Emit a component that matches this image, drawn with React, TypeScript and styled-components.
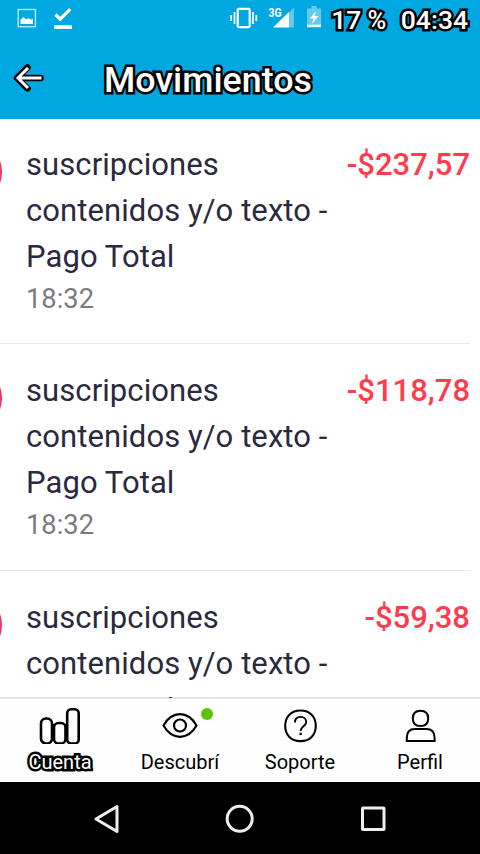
import React from "react";
import styled, { createGlobalStyle, css } from "styled-components";

const GlobalStyle = createGlobalStyle`
  * { box-sizing: border-box; }
  body { margin: 0; background: #fff; font-family: Roboto, sans-serif; overflow: hidden; }
  svg { display: block; flex: none; }
`;

const outlined = css`
  color: #fff;
  -webkit-text-stroke: 5px #000;
  paint-order: stroke fill;
  stroke-linejoin: round;
`;

const Screen = styled.div`
  width: 480px;
  height: 854px;
  display: flex;
  flex-direction: column;
  overflow: hidden;
  background: #fff;
`;

const StatusBar = styled.div`
  height: 38px;
  flex: none;
  display: flex;
  align-items: flex-start;
  justify-content: space-between;
  padding: 0 12px 0 17px;
  background: #00a8e1;
`;

const StatusGroup = styled.div`
  display: flex;
  align-items: center;
  height: 36px;
`;

const IconGap = styled.span<{ $size: number }>`
  width: ${(p) => p.$size}px;
`;

const StatusText = styled.span<{ $gap: number }>`
  ${outlined}
  margin-left: ${(p) => p.$gap}px;
  padding-top: 3px;
  font-size: 26.5px;
  font-weight: 500;
  line-height: 36px;
  white-space: pre;
`;

const Percent = styled.span`
  font-size: 25.5px;
  letter-spacing: -0.4px;
`;

const Header = styled.header`
  height: 81px;
  flex: none;
  display: flex;
  align-items: center;
  padding: 0 0 2px 12px;
  background: #00a8e1;
`;

const Title = styled.h1`
  ${outlined}
  margin: 0 0 0 60px;
  padding-top: 4px;
  font-size: 35.8px;
  line-height: 44px;
  font-weight: 500;
`;

const List = styled.main`
  height: 579px;
  flex: none;
  overflow: hidden;
`;

const Row = styled.section<{ $height: number; $top: number }>`
  height: ${(p) => p.$height}px;
  margin-right: 10px;
  padding-top: ${(p) => p.$top}px;
  display: flex;
  align-items: flex-start;
  border-bottom: 1px solid #e8e8e8;
`;

const Avatar = styled.div`
  width: 68px;
  height: 68px;
  flex: none;
  margin: -4px 24px 0 -66px;
  border-radius: 50%;
  background: #f5365c;
`;

const Details = styled.div`
  flex: 1;
`;

const Description = styled.p`
  margin: 0;
  width: 310px;
  font-size: 31px;
  line-height: 46px;
  letter-spacing: 0.08px;
  color: #2b293d;
`;

const Time = styled.time`
  display: block;
  font-size: 27.3px;
  line-height: 38px;
  color: #7b7b7b;
`;

const Amount = styled.strong`
  flex: none;
  width: 134px;
  text-align: right;
  margin-left: -10px;
  font-size: 31px;
  line-height: 46px;
  font-weight: 500;
  color: #ff3b4e;
  white-space: nowrap;
`;

const TabBar = styled.nav`
  position: relative;
  height: 84px;
  flex: none;
  display: grid;
  grid-template-columns: repeat(4, 1fr);
  border-top: 1px solid #e8e8e8;
  box-shadow: 0 -1px 0 rgba(0, 0, 0, 0.12);
  background: #fefefe;
`;

const Tab = styled.div`
  position: relative;
  display: flex;
  flex-direction: column;
  align-items: center;
  padding-top: 9px;
  font-size: 20px;
  line-height: 28px;
  color: #000;
`;

const TabLabel = styled.span<{ $active?: boolean }>`
  margin-top: 4px;
  ${(p) => p.$active && outlined}
`;

const Badge = styled.i`
  position: absolute;
  left: 81px;
  top: 9px;
  width: 12px;
  height: 12px;
  border-radius: 50%;
  background: #5ac400;
`;

const SystemNav = styled.footer`
  height: 72px;
  flex: none;
  display: flex;
  justify-content: space-between;
  align-items: center;
  padding: 1px 93px 0 92px;
  background: #000;
`;

const PictureIcon = () => (
  <svg width="20" height="20" viewBox="0 0 20 20">
    <rect x="1.200" y="1.500" width="17.200" height="17.200" fill="none" stroke="#b9e6f7" strokeWidth="1.400" />
    <path d="M3.500 16v-4.500l3-2.500 3 2.500 2-1.500 2 1.500 2.500-.5V16z" fill="#fff" />
  </svg>
);

const DoneIcon = () => (
  <svg width="20" height="24" viewBox="0 0 20 24">
    <path d="M2.500 8.500l4.700 4.700L17.200 3.200" fill="none" stroke="#fff" strokeWidth="3.200" />
    <path d="M1 19.200h18v3.700H1z" fill="#fff" />
  </svg>
);

const VibrateIcon = () => (
  <svg width="28" height="22" viewBox="0 0 28 22">
    <rect x="7.700" y="1.900" width="12" height="18.200" rx="1" fill="none" stroke="#fff" strokeWidth="2.200" />
    <path d="M4.500 5v12M1.200 8v6M23 5v12M26.300 8v6" stroke="#fff" strokeWidth="1.700" />
  </svg>
);

const SignalIcon = () => (
  <svg width="28" height="24" viewBox="0 0 28 24">
    <text x="0.500" y="10.500" fontFamily="Roboto, sans-serif" fontSize="12" fontWeight="700" textLength="13" lengthAdjust="spacingAndGlyphs" fill="#fff">3G</text>
    <path d="M26 1.500v20h-5V6.500z" fill="#66caed" />
    <path d="M5 21.500L21 6V21.500z" fill="#fff" />
  </svg>
);

const BatteryIcon = () => (
  <svg width="14" height="24" viewBox="0 0 14 24">
    <path d="M0 2.500h4.500V0h5v2.500H14V20H0z" fill="#66caed" />
    <path d="M9 5L3 12.500h3.500L5 18l6.500-8H7.500z" fill="#fff" />
    <path d="M0 18.700h14v2.500H0z" fill="#fff" />
  </svg>
);

const BackIcon = () => (
  <svg width="32" height="30" viewBox="0 0 32 30">
    <g fill="none">
      <path d="M15.500 4.500L5 15l10.500 10.500M6 15h22.500" stroke="#000" strokeWidth="6.500" strokeLinecap="round" strokeLinejoin="round" />
      <path d="M16 5L6 15l10 10M6.500 15h23" stroke="#fff" strokeWidth="3" />
    </g>
  </svg>
);

const BarsIcon = () => (
  <svg width="42" height="36" viewBox="0 0 42 36">
    <g fill="#fff" stroke="#000" strokeWidth="2.600">
      <rect x="2" y="10.500" width="11" height="25" rx="5" />
      <rect x="15" y="15" width="11.500" height="20.500" rx="4.500" />
      <rect x="28.200" y="1.300" width="11.500" height="34.200" rx="4" />
    </g>
    <path d="M14 16v17M27.400 16v17" stroke="#000" strokeWidth="2" />
  </svg>
);

const EyeIcon = () => (
  <svg width="36" height="36" viewBox="0 0 36 36">
    <g fill="none" stroke="#000" strokeWidth="2.200">
      <path d="M1.500 17.500C5.500 10.500 11 6.200 18 6.200s12.500 4.300 16.500 11.300C30.500 24.500 25 28.800 18 28.800S5.500 24.500 1.500 17.500z" strokeLinejoin="round" />
      <circle cx="18" cy="17.500" r="6" />
    </g>
  </svg>
);

const HelpIcon = () => (
  <svg width="36" height="36" viewBox="0 0 36 36">
    <path d="M18.500 2.500c9.300 0 15.300 6 15.300 15.300S27.800 33.100 18.500 33.100 3.200 27.100 3.200 17.800 9.200 2.500 18.500 2.500z" fill="none" stroke="#000" strokeWidth="2.100" />
    <path d="M13 14.500c0-4 2.500-5.600 5.600-5.600s5.600 1.800 5.600 5c0 4.500-5.600 4.300-5.600 9.100" fill="none" stroke="#000" strokeWidth="1.900" />
    <path d="M17.500 24.700h2.300V27h-2.300z" />
  </svg>
);

const PersonIcon = () => (
  <svg width="36" height="36" viewBox="0 0 36 36">
    <g fill="none" stroke="#000" strokeWidth="2">
      <path d="M18.500 2.800c5.200 0 7.700 2.400 7.700 7.600s-2.500 7.600-7.700 7.600-7.700-2.400-7.700-7.600 2.500-7.600 7.700-7.600z" />
      <path d="M4.800 33.100v-3.600c0-6 2.700-8.600 8.200-8.600h11.400c5.500 0 8.200 2.600 8.200 8.600v3.600z" />
    </g>
  </svg>
);

const NavBackIcon = () => (
  <svg width="28" height="30" viewBox="0 0 28 30">
    <path d="M25 2.500v25L4 15z" fill="none" stroke="#eee" strokeWidth="3" strokeLinejoin="round" />
  </svg>
);

const NavHomeIcon = () => (
  <svg width="30" height="30" viewBox="0 0 30 30">
    <circle cx="14.700" cy="14.800" r="12.500" fill="none" stroke="#eee" strokeWidth="3" />
  </svg>
);

const NavRecentIcon = () => (
  <svg width="28" height="28" viewBox="0 0 28 28">
    <rect x="3.500" y="3" width="21.500" height="21.500" rx=".5" fill="none" stroke="#eee" strokeWidth="3" />
  </svg>
);

const movements = [
  { amount: "-$237,57", time: "18:32", height: 225, top: 23 },
  { amount: "-$118,78", time: "18:32", height: 227, top: 24 },
  { amount: "-$59,38", height: 226, top: 24 },
];

const tabs = [
  { label: "Cuenta", Icon: BarsIcon, active: true },
  { label: "Descubrí", Icon: EyeIcon, badge: true },
  { label: "Soporte", Icon: HelpIcon },
  { label: "Perfil", Icon: PersonIcon },
];

export default function App() {
  return (
    <Screen>
      <GlobalStyle />
      <StatusBar>
        <StatusGroup>
          <PictureIcon />
          <IconGap $size={16} />
          <DoneIcon />
        </StatusGroup>
        <StatusGroup>
          <VibrateIcon />
          <IconGap $size={10} />
          <SignalIcon />
          <IconGap $size={11} />
          <BatteryIcon />
          <StatusText $gap={10}>
            17<Percent> %</Percent>
          </StatusText>
          <StatusText $gap={15}>04:34</StatusText>
        </StatusGroup>
      </StatusBar>
      <Header>
        <BackIcon />
        <Title>Movimientos</Title>
      </Header>
      <List>
        {movements.map((m) => (
          <Row key={m.amount} $height={m.height} $top={m.top}>
            <Avatar />
            <Details>
              <Description>suscripciones contenidos y/o texto - Pago Total</Description>
              {m.time && <Time>{m.time}</Time>}
            </Details>
            <Amount>{m.amount}</Amount>
          </Row>
        ))}
      </List>
      <TabBar>
        {tabs.map(({ label, Icon, active, badge }) => (
          <Tab key={label}>
            <Icon />
            <TabLabel $active={active}>{label}</TabLabel>
            {badge && <Badge />}
          </Tab>
        ))}
      </TabBar>
      <SystemNav>
        <NavBackIcon />
        <NavHomeIcon />
        <NavRecentIcon />
      </SystemNav>
    </Screen>
  );
}
